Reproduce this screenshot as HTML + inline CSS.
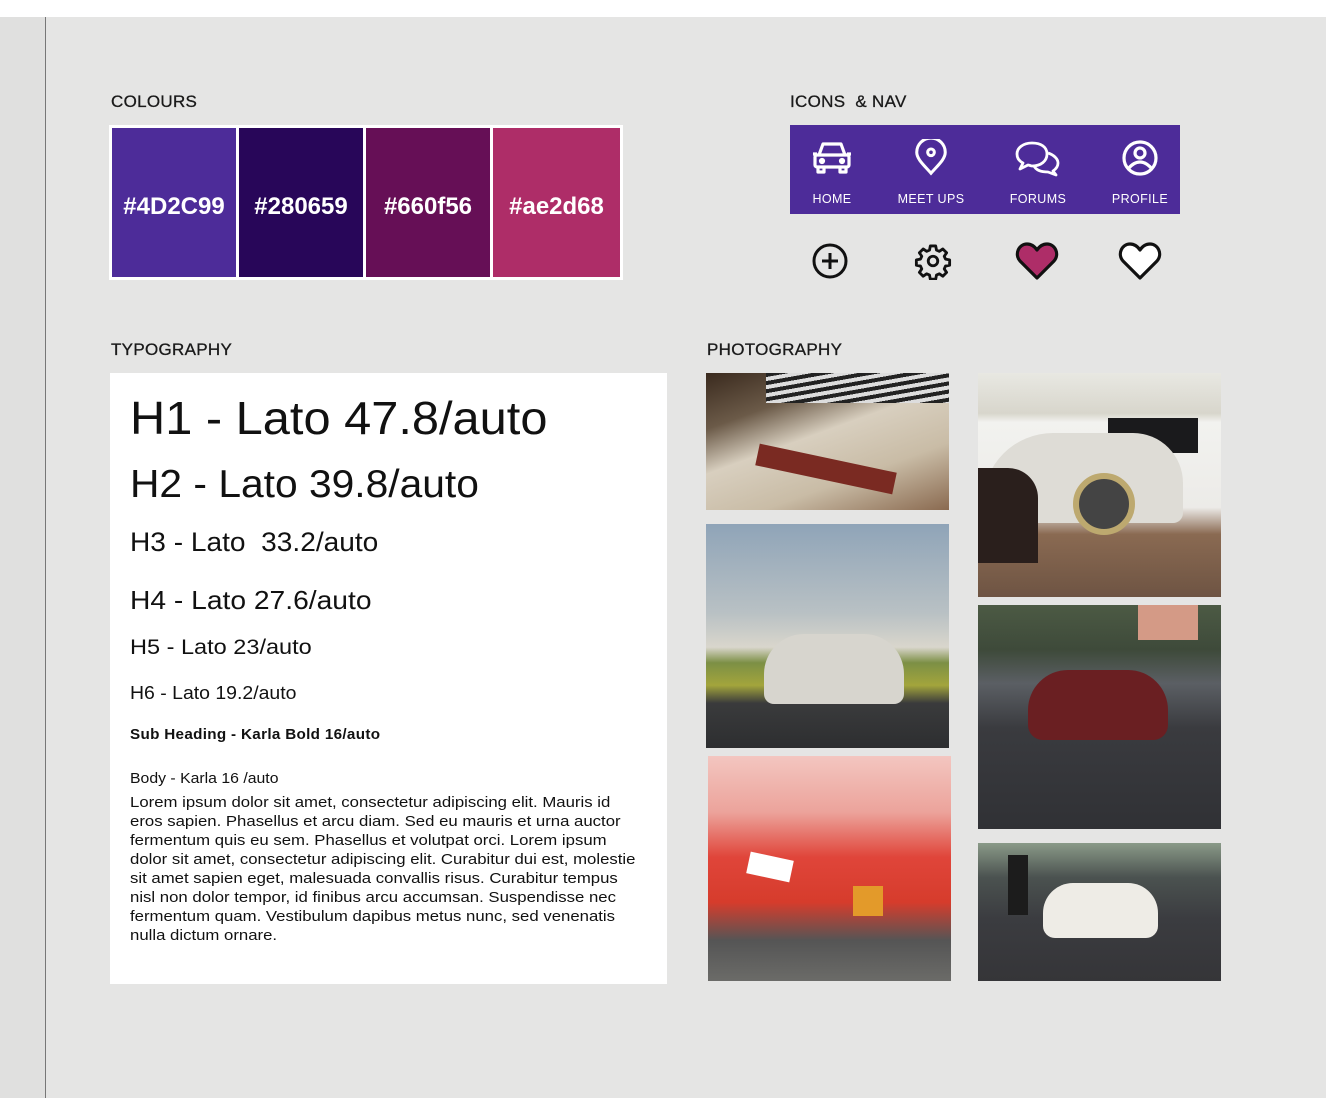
<!DOCTYPE html>
<html><head><meta charset="utf-8"><style>
*{margin:0;padding:0;box-sizing:border-box}
body{width:1326px;height:1098px;position:relative;overflow:hidden;background:#e5e5e4;font-family:"Liberation Sans",sans-serif;color:#111}
.a{position:absolute}
.lbl{font-size:17px;letter-spacing:.3px;color:#1a1a1a;-webkit-text-stroke:.3px #1a1a1a}
.sw{position:absolute;top:128px;width:124px;height:149px;color:#fff;font-weight:bold;font-size:24px;display:flex;align-items:center;justify-content:center;padding-top:8px}
.nav{position:absolute;left:790px;top:125px;width:390px;height:89px;background:#4d2c99}
.ni{position:absolute;top:0;width:90px;text-align:center;color:#fff;font-size:12.5px;letter-spacing:.4px}
.ni svg{display:block;margin:14px auto 0;height:38px}
.ni span{position:absolute;left:0;right:0;top:67px}
.ty{position:absolute;left:130px;color:#111;white-space:nowrap;transform-origin:left top}
.ph{position:absolute;overflow:hidden}
</style></head><body>
<div class="a" style="left:0;top:0;width:1326px;height:17px;background:#fff"></div>
<div class="a" style="left:0;top:17px;width:45px;height:1081px;background:#e0e0df"></div>
<div class="a" style="left:45px;top:17px;width:1px;height:1081px;background:#777"></div>

<div class="a lbl" style="left:111px;top:92px">COLOURS</div>
<div class="a" style="left:109px;top:125px;width:514px;height:155px;background:#fff"></div>
<div class="sw" style="left:112px;background:#4d2c99">#4D2C99</div>
<div class="sw" style="left:239px;background:#280659">#280659</div>
<div class="sw" style="left:366px;background:#660f56">#660f56</div>
<div class="sw" style="left:493px;width:127px;background:#ae2d68">#ae2d68</div>

<div class="a lbl" style="left:790px;top:92px">ICONS &nbsp;&amp; NAV</div>
<div class="nav">
 <div class="ni" style="left:-3px"><svg width="42" height="38" viewBox="0 0 42 38" fill="none" stroke="#fff" stroke-width="3.2" stroke-linejoin="round"><path d="M8 16 L12 5 H30 L34 16"/><rect x="4" y="16" width="34" height="12" rx="2"/><path d="M7 28v5h6v-5M29 28v5h6v-5"/><path d="M2 15h4M36 15h4"/><circle cx="11" cy="22" r="1.5" fill="#fff"/><circle cx="31" cy="22" r="1.5" fill="#fff"/></svg><span>HOME</span></div>
 <div class="ni" style="left:96px"><svg width="42" height="40" viewBox="0 0 42 40" fill="none" stroke="#fff" stroke-width="3.2"><path d="M21 36 C13 27 6 21 6 14 A15 15 0 0 1 36 14 C36 21 29 27 21 36Z"/><circle cx="21" cy="14" r="3.5"/></svg><span>MEET UPS</span></div>
 <div class="ni" style="left:203px"><svg width="48" height="38" viewBox="0 0 48 38" fill="none" stroke="#fff" stroke-width="2.8" stroke-linejoin="round"><path d="M18 4C9 4 3 9 3 15c0 4 2 7 6 9l-3 6 8-4c1 0 3 1 4 1 9 0 15-5 15-12S27 4 18 4Z"/><path d="M34 14c6 2 10 6 10 10 0 3-2 6-5 8l3 4-8-3c-8 0-12-2-14-6"/></svg><span>FORUMS</span></div>
 <div class="ni" style="left:305px"><svg width="40" height="38" viewBox="0 0 40 38" fill="none" stroke="#fff" stroke-width="3.2"><circle cx="20" cy="19" r="16"/><circle cx="20" cy="14" r="5"/><path d="M8 30c4-5 8-7 12-7s8 2 12 7"/></svg><span>PROFILE</span></div>
</div>
<svg class="a" style="left:811px;top:242px" width="38" height="38" viewBox="0 0 38 38" fill="none" stroke="#111" stroke-width="3"><circle cx="19" cy="19" r="16"/><path d="M19 11v16M11 19h16"/></svg>
<svg class="a" style="left:914px;top:242px" width="38" height="38" viewBox="0 0 24 24" fill="none" stroke="#111" stroke-width="1.8" stroke-linejoin="round"><circle cx="12" cy="12" r="3"/><path d="M10.3 2.5h3.4l.5 2.6 1.8.8 2.2-1.5 2.4 2.4-1.5 2.2.8 1.8 2.6.5v3.4l-2.6.5-.8 1.8 1.5 2.2-2.4 2.4-2.2-1.5-1.8.8-.5 2.6h-3.4l-.5-2.6-1.8-.8-2.2 1.5-2.4-2.4 1.5-2.2-.8-1.8-2.6-.5v-3.4l2.6-.5.8-1.8-1.5-2.2 2.4-2.4 2.2 1.5 1.8-.8z"/></svg>
<svg class="a" style="left:1015px;top:241px" width="44" height="40" viewBox="0 0 44 40"><path d="M22 37 L5 20 C-1 13 4 3 12 3 C17 3 20 6 22 9 C24 6 27 3 32 3 C40 3 45 13 39 20Z" fill="#ae2d68" stroke="#111" stroke-width="3.2" stroke-linejoin="round"/></svg>
<svg class="a" style="left:1118px;top:241px" width="44" height="40" viewBox="0 0 44 40"><path d="M22 37 L5 20 C-1 13 4 3 12 3 C17 3 20 6 22 9 C24 6 27 3 32 3 C40 3 45 13 39 20Z" fill="#fff" stroke="#111" stroke-width="3.2" stroke-linejoin="round"/></svg>

<div class="a lbl" style="left:111px;top:340px">TYPOGRAPHY</div>
<div class="a" style="left:110px;top:373px;width:557px;height:611px;background:#fff"></div>
<div class="ty" style="top:390px;font-size:46px;line-height:56px;transform:scaleX(1.06)">H1 - Lato 47.8/auto</div>
<div class="ty" style="top:462px;font-size:39px;line-height:46px;transform:scaleX(1.045)">H2 - Lato 39.8/auto</div>
<div class="ty" style="top:525px;font-size:26.5px;line-height:34px;transform:scaleX(1.06)">H3 - Lato &nbsp;33.2/auto</div>
<div class="ty" style="top:583px;font-size:26px;line-height:34px;transform:scaleX(1.085)">H4 - Lato 27.6/auto</div>
<div class="ty" style="top:635px;font-size:21px;line-height:26px;transform:scaleX(1.12)">H5 - Lato 23/auto</div>
<div class="ty" style="top:682px;font-size:18px;line-height:22px;transform:scaleX(1.08)">H6 - Lato 19.2/auto</div>
<div class="ty" style="top:727px;font-size:14.5px;font-weight:bold;letter-spacing:.3px;transform:scaleX(1.05)">Sub Heading - Karla Bold 16/auto</div>
<div class="ty" style="top:771px;font-size:14.5px;transform:scaleX(1.09)">Body - Karla 16 /auto</div>
<div class="ty" style="top:794px;font-size:14.5px;line-height:19px;transform:scaleX(1.155)">Lorem ipsum dolor sit amet, consectetur adipiscing elit. Mauris id<br>eros sapien. Phasellus et arcu diam. Sed eu mauris et urna auctor<br>fermentum quis eu sem. Phasellus et volutpat orci. Lorem ipsum<br>dolor sit amet, consectetur adipiscing elit. Curabitur dui est, molestie<br>sit amet sapien eget, malesuada convallis risus. Curabitur tempus<br>nisl non dolor tempor, id finibus arcu accumsan. Suspendisse nec<br>fermentum quam. Vestibulum dapibus metus nunc, sed venenatis<br>nulla dictum ornare.</div>

<div class="a lbl" style="left:707px;top:340px">PHOTOGRAPHY</div>
<div class="ph" style="left:706px;top:373px;width:243px;height:137px;background:linear-gradient(160deg,#3a2a1e 0%,#6b5a48 25%,#d8cfbf 45%,#c9bca6 70%,#8a6a50 100%)">
 <div class="a" style="left:60px;top:0;width:183px;height:30px;background:repeating-linear-gradient(170deg,#222 0 4px,#ddd 4px 8px)"></div>
 <div class="a" style="left:50px;top:85px;width:140px;height:22px;background:#7a2a22;transform:rotate(12deg)"></div>
</div>
<div class="ph" style="left:706px;top:524px;width:243px;height:224px;background:linear-gradient(180deg,#8fa4b8 0%,#b9c1c4 40%,#d9d6cc 55%,#7c8f45 62%,#a3a53c 72%,#3a3b3c 80%,#2d2e30 100%)">
 <div class="a" style="left:58px;top:110px;width:140px;height:70px;border-radius:40px 40px 10px 10px;background:#d7d5ce"></div>
</div>
<div class="ph" style="left:708px;top:756px;width:243px;height:225px;background:linear-gradient(180deg,#f3c6c0 0%,#eca39b 25%,#e0453a 45%,#d63c2c 65%,#555 82%,#6b6b68 100%)">
 <div class="a" style="left:40px;top:100px;width:44px;height:22px;background:#fff;transform:rotate(12deg)"></div>
 <div class="a" style="left:145px;top:130px;width:30px;height:30px;background:#e39a2a"></div>
</div>
<div class="ph" style="left:978px;top:373px;width:243px;height:224px;background:linear-gradient(180deg,#e8e8e2 0%,#d8d6cc 18%,#f2f2ef 22%,#ecebe8 60%,#8a6a52 72%,#6e5443 100%)">
 <div class="a" style="left:130px;top:45px;width:90px;height:35px;background:#1a1a1c"></div>
 <div class="a" style="left:5px;top:60px;width:200px;height:90px;border-radius:70px 50px 10px 10px;background:#dedcd6"></div>
 <div class="a" style="left:0;top:95px;width:60px;height:95px;background:#2a1f1c;border-radius:0 30px 0 0"></div>
 <div class="a" style="left:95px;top:100px;width:62px;height:62px;border-radius:50%;background:#444;border:6px solid #bda96f"></div>
</div>
<div class="ph" style="left:978px;top:605px;width:243px;height:224px;background:linear-gradient(180deg,#4c5a44 0%,#3e4a3a 20%,#5b5f64 35%,#3a3b3f 55%,#303135 100%)">
 <div class="a" style="left:160px;top:0;width:60px;height:35px;background:#d49a86"></div>
 <div class="a" style="left:50px;top:65px;width:140px;height:70px;border-radius:40px 40px 15px 15px;background:#6a1f22"></div>
</div>
<div class="ph" style="left:978px;top:843px;width:243px;height:138px;background:linear-gradient(180deg,#8a9a88 0%,#4b5250 25%,#3b3c40 55%,#353538 100%)">
 <div class="a" style="left:65px;top:40px;width:115px;height:55px;border-radius:30px 30px 12px 12px;background:#eeece6"></div>
 <div class="a" style="left:30px;top:12px;width:20px;height:60px;background:#1c1c1c"></div>
</div>
</body></html>
